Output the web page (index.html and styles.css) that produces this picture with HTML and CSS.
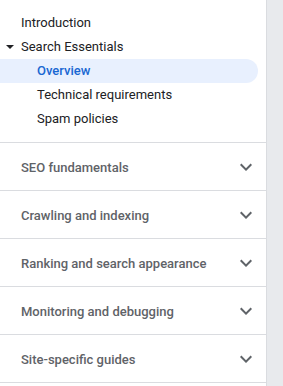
FILE: index.html
```html
<!DOCTYPE html>
<html>
<head>
<meta charset="utf-8">
<link rel="stylesheet" href="styles.css">
</head>
<body>
<div class="page">
  <nav class="sidebar">
    <ul class="top-list">
      <li class="item">Introduction</li>
      <li class="item expanded">
        <svg class="caret" width="10" height="10" viewBox="0 0 10 10"><path d="M1 3h8L5 7z" fill="#202124"/></svg>
        Search Essentials
      </li>
      <li class="item sub active">Overview</li>
      <li class="item sub">Technical requirements</li>
      <li class="item sub">Spam policies</li>
    </ul>
    <div class="section"><span>SEO fundamentals</span><svg class="chev" width="24" height="24" viewBox="0 0 24 24"><path d="M16.59 8.59L12 13.17 7.41 8.59 6 10l6 6 6-6z" fill="#5f6368"/></svg></div>
    <div class="section"><span>Crawling and indexing</span><svg class="chev" width="24" height="24" viewBox="0 0 24 24"><path d="M16.59 8.59L12 13.17 7.41 8.59 6 10l6 6 6-6z" fill="#5f6368"/></svg></div>
    <div class="section"><span>Ranking and search appearance</span><svg class="chev" width="24" height="24" viewBox="0 0 24 24"><path d="M16.59 8.59L12 13.17 7.41 8.59 6 10l6 6 6-6z" fill="#5f6368"/></svg></div>
    <div class="section"><span>Monitoring and debugging</span><svg class="chev" width="24" height="24" viewBox="0 0 24 24"><path d="M16.59 8.59L12 13.17 7.41 8.59 6 10l6 6 6-6z" fill="#5f6368"/></svg></div>
    <div class="section"><span>Site-specific guides</span><svg class="chev" width="24" height="24" viewBox="0 0 24 24"><path d="M16.59 8.59L12 13.17 7.41 8.59 6 10l6 6 6-6z" fill="#5f6368"/></svg></div>
  </nav>
  <div class="rest"></div>
</div>
</body>
</html>
```

FILE: styles.css
```css
* { box-sizing: border-box; }
html, body { margin: 0; padding: 0; background: #fff; }
body { font-family: Roboto, "Noto Sans", Arial, sans-serif; font-size: 13px; }
.page { display: flex; height: 386px; overflow: hidden; }
.sidebar { width: 267px; flex: none; border-right: 1px solid #dadce0; background: #fff; }
.rest { flex: 1; background: #e8eaed; }
.top-list { list-style: none; margin: 0; padding: 11px 0 11px; border-bottom: 1px solid #dadce0; }
.item { height: 24px; line-height: 24px; padding-left: 21px; color: #202124; position: relative; white-space: nowrap; }
.caret { position: absolute; left: 5px; top: 7px; }
.sub { padding-left: 37px; margin-right: 8px; }
.active { background: #e8f0fe; color: #1967d2; font-weight: 500; border-radius: 0 12px 12px 0; }
.section { height: 48px; border-bottom: 1px solid #dadce0; display: flex; align-items: center; justify-content: space-between; padding: 1px 8px 0 21px; color: #5f6368; font-weight: 500; }
.chev { flex: none; }
```
